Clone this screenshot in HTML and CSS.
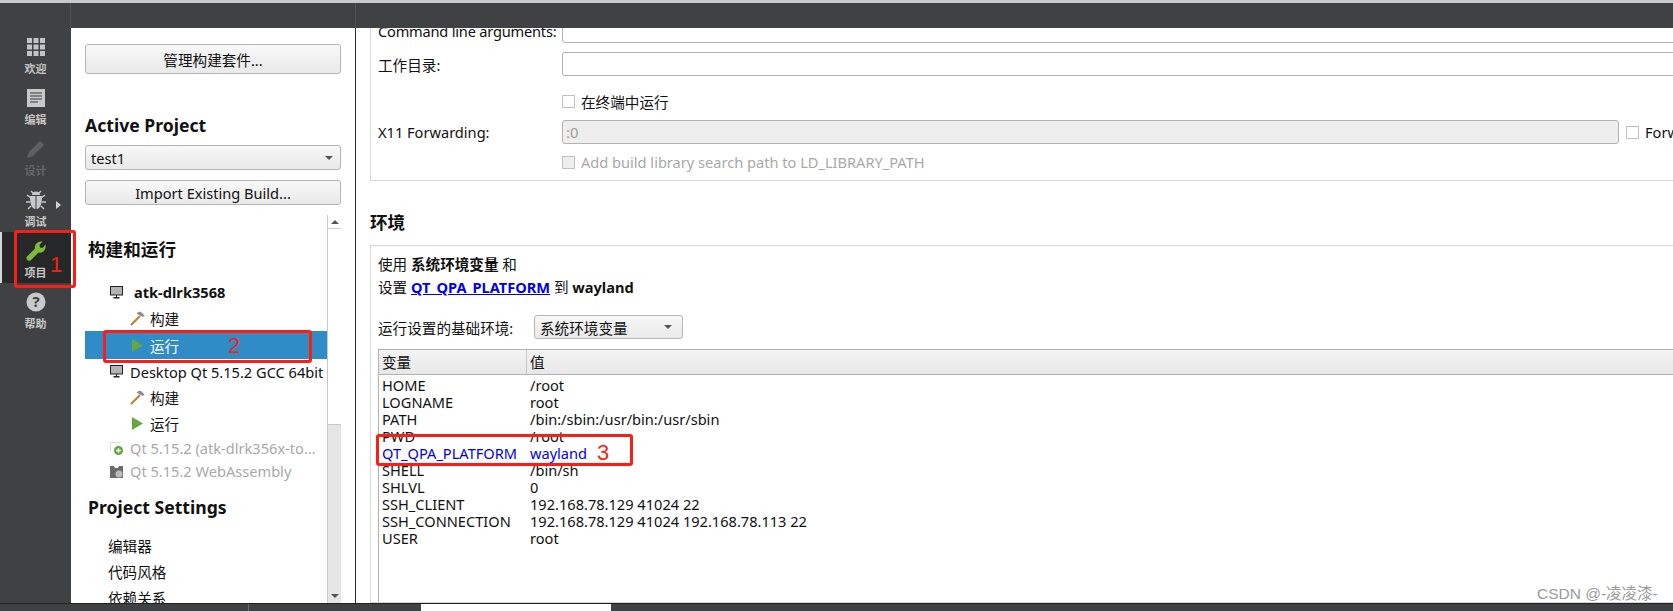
FILE: index.html
```html
<!DOCTYPE html>
<html lang="zh-CN">
<head>
  <meta charset="UTF-8">
  <title>Qt Creator - 项目</title>
  <link rel="stylesheet" href="styles.css">
</head>
<body>
  <div class="window">
    <div class="top-strip"></div>

    <!-- Toolbar kosong di atas -->
    <div class="toolbar">
      <div class="toolbar-left"></div>
      <div class="toolbar-mid"></div>
    </div>

    <div class="workspace">
      <!-- Mode bar -->
      <aside class="modebar">
        <div class="mode">
          <svg class="mode-icon" width="20" height="20" viewBox="0 0 20 20"><g fill="#c4c4c4"><rect x="1" y="1" width="5" height="5"/><rect x="7.5" y="1" width="5" height="5"/><rect x="14" y="1" width="5" height="5"/><rect x="1" y="7.5" width="5" height="5"/><rect x="7.5" y="7.5" width="5" height="5"/><rect x="14" y="7.5" width="5" height="5"/><rect x="1" y="14" width="5" height="5"/><rect x="7.5" y="14" width="5" height="5"/><rect x="14" y="14" width="5" height="5"/></g></svg>
          <span>欢迎</span>
        </div>
        <div class="mode">
          <svg class="mode-icon" width="20" height="20" viewBox="0 0 20 20"><rect x="1" y="1" width="18" height="18" fill="#c9c9c9"/><path d="M4 5h12M4 8h12M4 11h12M4 14h8" stroke="#3a3a3a" stroke-width="1.2"/></svg>
          <span>编辑</span>
        </div>
        <div class="mode mode-off">
          <svg class="mode-icon" width="20" height="20" viewBox="0 0 20 20"><path d="M1 19l2-6L14 2l4 4L7 17z" fill="#5f6061"/></svg>
          <span>设计</span>
        </div>
        <div class="mode">
          <svg class="mode-icon" width="20" height="20" viewBox="0 0 20 20"><path d="M6 5a4 3.4 0 0 1 8 0zM4 6h5.500v13C5.500 18.500 4 14 4 6zM16 6h-5.500v13c4-.5 5.500-5 5.500-13z" fill="#c9c9c9"/><path d="M5 8L1 5M15 8l4-3M4 12H0M16 12h4M5 16l-3 3M15 16l3 3M7 3L5 1M13 3l2-2" stroke="#c9c9c9" stroke-width="1.400"/></svg>
          <span>调试</span>
          <svg class="mode-arrow" width="5" height="8" viewBox="0 0 5 8"><path d="M0 0l5 4-5 4z" fill="#d0d0d0"/></svg>
        </div>
        <div class="mode mode-on">
          <svg class="mode-icon" width="20" height="20" viewBox="0 0 20 20"><path d="M.5 16L9 7.500C8.200 3.500 11.500 0 16.500 .5L13.500 4l.5 2.500 2.500.5 3-3.500C20.500 9 16.500 12.500 12.500 11.500L4.500 19.500C2.500 20.500 0 18.500 .5 16z" fill="#7fb83a"/></svg>
          <span>项目</span>
        </div>
        <div class="mode">
          <svg class="mode-icon" width="20" height="20" viewBox="0 0 20 20"><circle cx="10" cy="10" r="9.500" fill="#c9c9c9"/><text x="10" y="15" text-anchor="middle" class="help-mark">?</text></svg>
          <span>帮助</span>
        </div>
      </aside>

      <!-- Panel proyek -->
      <section class="panel">
        <button class="btn btn-kits">管理构建套件...</button>
        <h2 class="panel-title">Active Project</h2>
        <div class="btn combo combo-project"><span>test1</span><i class="caret"></i></div>
        <button class="btn btn-import">Import Existing Build...</button>

        <div class="tree-wrap">
          <div class="tree">
            <h2 class="tree-title">构建和运行</h2>
            <div class="row row-kit row-first">
              <svg class="kit-icon kit-icon-wide" width="13" height="13" viewBox="0 0 13 13"><rect x=".5" y=".5" width="12" height="8.500" fill="#b4b4b4" stroke="#222"/><path d="M6 9h1v2H6zM3.500 11h6v1.500h-6z" fill="#222"/></svg>
              <b>atk-dlrk3568</b>
            </div>
            <div class="row row-step">
              <svg class="step-icon" width="15" height="15" viewBox="0 0 15 15"><path d="M1 14l9-9" stroke="#c9792f" stroke-width="2"/><path d="M6.500 2.500C8.500 .5 10.500 .5 11.500 1.500l3 3-1.500 1.500-3-1.500z" fill="#8c8c8c"/></svg>
              构建
            </div>
            <div class="row row-step row-selected">
              <svg class="step-icon" width="15" height="15" viewBox="0 0 15 15"><path d="M2 1l11 6.500-11 6.500z" fill="#66a83e"/></svg>
              运行
            </div>
            <div class="row row-kit row-desktop">
              <svg class="kit-icon" width="13" height="13" viewBox="0 0 13 13"><rect x=".5" y=".5" width="12" height="8.500" fill="#b4b4b4" stroke="#222"/><path d="M6 9h1v2H6zM3.500 11h6v1.500h-6z" fill="#222"/></svg>
              Desktop Qt 5.15.2 GCC 64bit
            </div>
            <div class="row row-step">
              <svg class="step-icon" width="15" height="15" viewBox="0 0 15 15"><path d="M1 14l9-9" stroke="#c9792f" stroke-width="2"/><path d="M6.500 2.500C8.500 .5 10.500 .5 11.500 1.500l3 3-1.500 1.500-3-1.500z" fill="#8c8c8c"/></svg>
              构建
            </div>
            <div class="row row-step">
              <svg class="step-icon" width="15" height="15" viewBox="0 0 15 15"><path d="M2 1l11 6.500-11 6.500z" fill="#66a83e"/></svg>
              运行
            </div>
            <div class="row row-kit row-off row-qt">
              <svg class="kit-icon" width="13" height="13" viewBox="0 0 13 13"><path d="M.5 9V.5h10" fill="none" stroke="#ddd"/><circle cx="8.500" cy="8.500" r="4.500" fill="#5fa53a"/><path d="M6 8.500h5M8.500 6v5" stroke="#fff" stroke-width="1.300"/></svg>
              Qt 5.15.2 (atk-dlrk356x-to…
            </div>
            <div class="row row-kit row-off row-wasm">
              <svg class="kit-icon" width="13" height="13" viewBox="0 0 13 13"><path d="M0 1h4l1 2h3l1-2h4v12H0z" fill="#6a6a6a"/><circle cx="9" cy="9" r="3.500" fill="#bbb"/></svg>
              Qt 5.15.2 WebAssembly
            </div>
            <h2 class="tree-title tree-title-settings">Project Settings</h2>
            <div class="row row-setting">编辑器</div>
            <div class="row row-setting">代码风格</div>
            <div class="row row-setting">依赖关系</div>
          </div>
          <div class="scrollbar">
            <div class="scroll-btn"><i class="caret caret-up"></i></div>
            <div class="scroll-track"></div>
            <div class="scroll-thumb"></div>
            <div class="scroll-btn scroll-btn-down"><i class="caret"></i></div>
          </div>
        </div>
      </section>

      <!-- Konten utama -->
      <main class="content">
        <div class="group group-run">
          <div class="form-row">
            <label class="form-label label-tight">Command line arguments:</label>
            <div class="input"></div>
          </div>
          <div class="form-row gap-9">
            <label class="form-label">工作目录:</label>
            <div class="input"></div>
          </div>
          <div class="form-row gap-13">
            <label class="form-label"></label>
            <i class="check"></i><span>在终端中运行</span>
          </div>
          <div class="form-row gap-7">
            <label class="form-label">X11 Forwarding:</label>
            <div class="input input-off">:0</div>
            <div class="forward"><i class="check"></i><span>Forward to local display</span></div>
          </div>
          <div class="form-row gap-6 text-off">
            <label class="form-label"></label>
            <i class="check check-off"></i><span>Add build library search path to LD_LIBRARY_PATH</span>
          </div>
        </div>

        <h2 class="section-title">环境</h2>

        <div class="group group-env">
          <p class="env-line">使用 <b>系统环境变量</b> 和</p>
          <p class="env-line">设置 <a href="#">QT_QPA_PLATFORM</a> 到 <b>wayland</b></p>

          <div class="base-row">
            <label class="base-label">运行设置的基础环境:</label>
            <div class="btn combo combo-base"><span>系统环境变量</span><i class="caret"></i></div>
          </div>

          <div class="env-table">
            <div class="env-head">
              <div class="head-cell head-var">变量</div>
              <div class="head-cell">值</div>
            </div>
            <div class="env-row"><span>HOME</span><span>/root</span></div>
            <div class="env-row"><span>LOGNAME</span><span>root</span></div>
            <div class="env-row"><span>PATH</span><span>/bin:/sbin:/usr/bin:/usr/sbin</span></div>
            <div class="env-row"><span>PWD</span><span>/root</span></div>
            <div class="env-row env-changed"><span>QT_QPA_PLATFORM</span><span>wayland</span></div>
            <div class="env-row"><span>SHELL</span><span>/bin/sh</span></div>
            <div class="env-row"><span>SHLVL</span><span>0</span></div>
            <div class="env-row"><span>SSH_CLIENT</span><span>192.168.78.129 41024 22</span></div>
            <div class="env-row"><span>SSH_CONNECTION</span><span>192.168.78.129 41024 192.168.78.113 22</span></div>
            <div class="env-row"><span>USER</span><span>root</span></div>
          </div>
        </div>
      </main>
    </div>

    <!-- Status bar, hampir terpotong -->
    <div class="statusbar">
      <div class="status-first"></div>
      <div class="status-second"></div>
      <div class="status-tab"></div>
    </div>

    <!-- Anotasi merah di atas screenshot -->
    <div class="mark mark-1"></div>
    <span class="mark-num num-1">1</span>
    <div class="mark mark-2"></div>
    <span class="mark-num num-2">2</span>
    <div class="mark mark-3"></div>
    <span class="mark-num num-3">3</span>

    <div class="watermark">CSDN @-凌凌漆-</div>
  </div>
</body>
</html>
```

FILE: styles.css
```css
* {
  box-sizing: border-box;
}

body {
  margin: 0;
  font-family: "Noto Sans", "Noto Sans CJK SC", sans-serif;
  font-size: 14.6px;
  color: #111;
  background-color: #fff;
}

/* Layout utama */
.window {
  position: relative;
  display: flex;
  flex-direction: column;
  width: 1673px;
  height: 611px;
  overflow: hidden;
}

.top-strip {
  height: 3px;
  background-color: #c9c9c9;
}

.toolbar {
  display: flex;
  height: 25px;
  background-color: #404142;
}

.toolbar-left {
  width: 71px;
  border-right: 1px solid #505152;
}

.toolbar-mid {
  width: 285px;
  border-right: 1px solid #505152;
}

.workspace {
  display: flex;
  flex: 1;
  min-height: 0;
}

/* Mode bar di kiri */
.modebar {
  flex: none;
  width: 71px;
  background-color: #404142;
}

.mode {
  position: relative;
  display: flex;
  flex-direction: column;
  align-items: center;
  height: 51px;
  padding-top: 9px;
  color: #c6c6c6;
  font-size: 11px;
  font-weight: 700;
  line-height: 16px;
}

.mode-icon {
  margin-bottom: 4px;
}

.mode-off {
  color: #656667;
}

.mode-on {
  background-color: #262728;
  border-left: 2px solid #d5d5d5;
  padding-right: 2px;
}

.mode-arrow {
  position: absolute;
  top: 20px;
  left: 56px;
}

.help-mark {
  font-size: 15px;
  font-weight: 700;
  fill: #404142;
}

/* Panel proyek */
.panel {
  display: flex;
  flex: none;
  flex-direction: column;
  width: 285px;
  padding: 16px 14px 0;
  background-color: #fff;
  border-right: 1px solid #2a2a2a;
}

.btn {
  width: 256px;
  padding: 0;
  font: inherit;
  color: #111;
  background: linear-gradient(#f8f8f8, #e9e9e9);
  border: 1px solid #b5b5b5;
  border-radius: 3px;
}

.btn-kits {
  flex: none;
  height: 30px;
}

.btn-import {
  flex: none;
  height: 25px;
  margin-top: 10px;
}

.panel-title {
  height: 24px;
  margin: 39px 0 8px;
  font-size: 17.6px;
  line-height: 24px;
}

.combo {
  display: flex;
  flex: none;
  align-items: center;
  justify-content: space-between;
  height: 25px;
  padding: 0 7px 0 5px;
}

.caret {
  width: 0;
  height: 0;
  border-left: 4px solid transparent;
  border-right: 4px solid transparent;
  border-top: 4px solid #555;
}

.caret-up {
  border-top: 0;
  border-bottom: 4px solid #555;
}

/* Pohon build and run */
.tree-wrap {
  display: flex;
  flex: 1;
  min-height: 0;
  margin-top: 10px;
  width: 256px;
}

.tree {
  flex: 1;
  overflow: hidden;
}

.tree-title {
  height: 24px;
  margin: 22px 0 0 3px;
  font-size: 17.6px;
  line-height: 24px;
  white-space: nowrap;
}

.tree-title-settings {
  margin-top: 13px;
}

.row {
  display: flex;
  align-items: center;
  height: 26px;
  white-space: nowrap;
}

.row-first {
  margin-top: 18px;
}

.row-kit {
  padding-left: 25px;
}

.kit-icon {
  flex: none;
  margin-right: 7px;
}

.kit-icon-wide {
  margin-right: 11px;
}

.row-step {
  padding-left: 45px;
}

.step-icon {
  flex: none;
  margin-right: 5px;
}

.row-selected {
  height: 28px;
  color: #fff;
  background-color: #2f8cc7;
}

.row-desktop {
  height: 25px;
}

.row-off {
  color: #a9a9a9;
}

.row-qt {
  height: 24px;
}

.row-wasm {
  height: 22px;
}

.row-setting {
  padding-left: 23px;
}

.tree-title-settings + .row-setting {
  margin-top: 13px;
}

.scrollbar {
  display: flex;
  flex: none;
  flex-direction: column;
  width: 14px;
  background-color: #fff;
  border-left: 1px solid #c8c8c8;
}

.scroll-btn {
  display: flex;
  flex: none;
  align-items: center;
  justify-content: center;
  height: 14px;
  border-bottom: 1px solid #d0d0d0;
}

.scroll-btn-down {
  border-bottom: 0;
  background-color: #e6e6e6;
}

.scroll-track {
  height: 195px;
}

.scroll-thumb {
  flex: 1;
  background-color: #e6e6e6;
  border-top: 1px solid #c8c8c8;
}

/* Konten utama */
.content {
  display: flex;
  flex: 1;
  flex-direction: column;
  min-width: 0;
  overflow: hidden;
  padding-left: 14px;
  background-color: #fff;
}

.group {
  margin-right: -60px;
  padding: 0 7px;
  border: 1px solid #d6d6d6;
}

.group-run {
  flex: none;
  height: 183px;
  margin-top: -30px;
  padding-top: 20px;
}

.form-row {
  display: flex;
  align-items: center;
  height: 24px;
  white-space: nowrap;
}

.gap-6 {
  margin-top: 6px;
}

.gap-7 {
  margin-top: 7px;
}

.gap-9 {
  margin-top: 9px;
}

.gap-13 {
  margin-top: 13px;
}

.form-label {
  flex: none;
  width: 184px;
}

.label-tight {
  letter-spacing: -0.2px;
}

.input {
  flex: 1;
  height: 100%;
  padding-left: 3px;
  background-color: #fff;
  border: 1px solid #b2b2b2;
  border-radius: 3px;
  line-height: 22px;
}

.input-off {
  color: #9d9d9d;
  background-color: #eee;
}

.forward {
  display: flex;
  flex: none;
  align-items: center;
  width: 106px;
  padding-left: 7px;
}

.check {
  flex: none;
  width: 13px;
  height: 13px;
  margin-right: 6px;
  background-color: #fff;
  border: 1px solid #c0c0c0;
}

.check-off {
  background-color: #eee;
}

.text-off {
  color: #a9a9a9;
}

.section-title {
  flex: none;
  height: 24px;
  margin: 29px 0 11px;
  font-size: 17.6px;
  line-height: 24px;
}

.group-env {
  display: flex;
  flex: 1;
  flex-direction: column;
  min-height: 0;
  padding-top: 7px;
}

.env-line {
  height: 23px;
  margin: 0;
  line-height: 23px;
}

.env-line a {
  color: #0000ee;
  font-weight: 700;
}

.base-row {
  display: flex;
  align-items: center;
  margin-top: 16px;
}

.base-label {
  width: 156px;
}

.combo-base {
  width: 149px;
  height: 24px;
  padding-right: 10px;
}

.env-table {
  flex: 1;
  margin-top: 10px;
  border: 1px solid #b2b2b2;
  border-bottom: 0;
}

.env-head {
  display: flex;
  height: 25px;
  margin-bottom: 2px;
  background: linear-gradient(#f4f4f4, #e8e8e8);
  border-bottom: 1px solid #b2b2b2;
}

.head-cell {
  padding-left: 3px;
  line-height: 24px;
}

.head-var {
  width: 148px;
  border-right: 1px solid #c6c6c6;
}

.env-row {
  display: flex;
  height: 17px;
  padding-left: 3px;
  line-height: 17px;
  white-space: nowrap;
}

.env-row span:first-child {
  width: 148px;
}

.env-changed {
  color: #0000ee;
}

/* Status bar */
.statusbar {
  display: flex;
  flex: none;
  height: 8px;
  padding-left: 71px;
  background-color: #404142;
  border-top: 1px solid #222;
}

.status-first {
  width: 178px;
  border-right: 1px solid #6a6a6a;
}

.status-second {
  width: 172px;
}

.status-tab {
  width: 190px;
  background-color: #fff;
}

/* Anotasi merah */
.mark {
  position: absolute;
  border: 3px solid #fa1e14;
  border-radius: 3px;
}

.mark-1 {
  top: 230px;
  left: 14px;
  width: 62px;
  height: 58px;
}

.mark-2 {
  top: 330px;
  left: 103px;
  width: 209px;
  height: 33px;
}

.mark-3 {
  top: 434px;
  left: 376px;
  width: 257px;
  height: 32px;
}

.mark-num {
  position: absolute;
  color: #fa1e14;
  font-family: "Liberation Sans", sans-serif;
  font-size: 22px;
  line-height: 24px;
}

.num-1 {
  top: 253px;
  left: 50px;
}

.num-2 {
  top: 334px;
  left: 228px;
}

.num-3 {
  top: 441px;
  left: 597px;
}

.watermark {
  position: absolute;
  top: 585px;
  left: 1537px;
  color: #9a9a9a;
  font-family: "Liberation Sans", "Noto Sans CJK SC", sans-serif;
  font-size: 15.5px;
  line-height: 18px;
}
```
